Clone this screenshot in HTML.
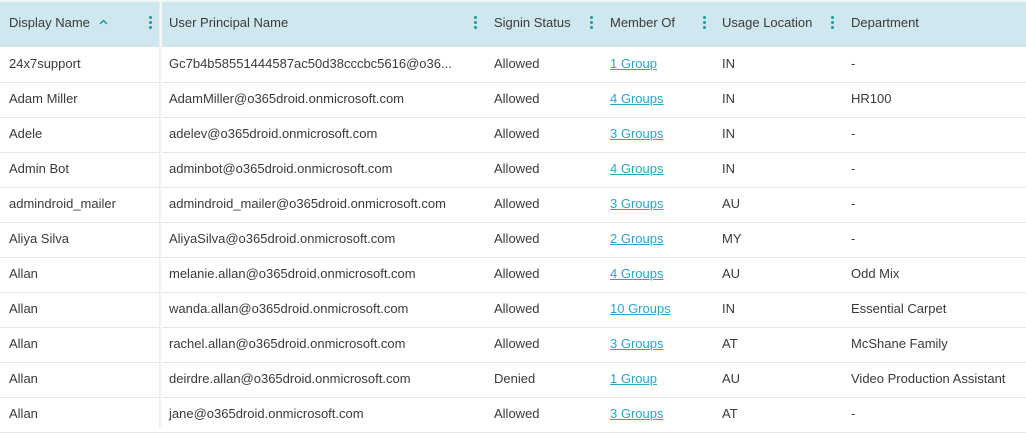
<!DOCTYPE html><html><head><style>
body{margin:0;width:1026px;height:426px;overflow:hidden;background:#fff;font-family:"Liberation Sans",Arial,sans-serif;font-size:13px;color:#3a3a3a}
.hd{position:absolute;top:2px;left:0;width:1026px;height:45px;background:#cfe7ee}
.top{position:absolute;top:0;left:0;width:1026px;height:2px;background:#eef6f8}
.t{position:absolute;white-space:nowrap}
.k{position:absolute;width:3px;top:16px}
.k i{display:block;width:3px;height:3px;background:#1a9a9a;border-radius:50%;margin-bottom:2px}
.row{position:absolute;left:0;width:1026px;height:35px;border-bottom:1px solid #e6e6e6;box-sizing:border-box}
a{color:#2aa5c9;text-decoration:underline}
.sh{position:absolute;left:159px;top:2px;width:3px;height:426px;background:linear-gradient(90deg,#ececec,#fbfbfb)}
</style></head><body>
<div class="top"></div><div class="hd"></div>
<div id="rows"></div>
<div class="sh"></div>
<div class="t" style="left:9px;top:15px">Display Name</div>
<svg style="position:absolute;left:99px;top:19px" width="9" height="6" viewBox="0 0 9 6"><path d="M1 5 L4.5 1.5 L8 5" fill="none" stroke="#1a9a9a" stroke-width="1.5"/></svg>
<div class="t" style="left:169px;top:15px">User Principal Name</div>
<div class="t" style="left:494px;top:15px">Signin Status</div>
<div class="t" style="left:610px;top:15px">Member Of</div>
<div class="t" style="left:722px;top:15px">Usage Location</div>
<div class="t" style="left:851px;top:15px">Department</div>
<div class="k" style="left:149px"><i></i><i></i><i></i></div>
<div class="k" style="left:474px"><i></i><i></i><i></i></div>
<div class="k" style="left:590px"><i></i><i></i><i></i></div>
<div class="k" style="left:703px"><i></i><i></i><i></i></div>
<div class="k" style="left:831px"><i></i><i></i><i></i></div>
<script>
var d=[["24x7support","Gc7b4b58551444587ac50d38cccbc5616@o36...","Allowed","1 Group","IN","-"],
["Adam Miller","AdamMiller@o365droid.onmicrosoft.com","Allowed","4 Groups","IN","HR100"],
["Adele","adelev@o365droid.onmicrosoft.com","Allowed","3 Groups","IN","-"],
["Admin Bot","adminbot@o365droid.onmicrosoft.com","Allowed","4 Groups","IN","-"],
["admindroid_mailer","admindroid_mailer@o365droid.onmicrosoft.com","Allowed","3 Groups","AU","-"],
["Aliya Silva","AliyaSilva@o365droid.onmicrosoft.com","Allowed","2 Groups","MY","-"],
["Allan","melanie.allan@o365droid.onmicrosoft.com","Allowed","4 Groups","AU","Odd Mix"],
["Allan","wanda.allan@o365droid.onmicrosoft.com","Allowed","10 Groups","IN","Essential Carpet"],
["Allan","rachel.allan@o365droid.onmicrosoft.com","Allowed","3 Groups","AT","McShane Family"],
["Allan","deirdre.allan@o365droid.onmicrosoft.com","Denied","1 Group","AU","Video Production Assistant"],
["Allan","jane@o365droid.onmicrosoft.com","Allowed","3 Groups","AT","-"]];
var x=[9,169,494,610,722,851],h="";
d.forEach(function(r,i){var y=48+i*35;h+='<div class="row" style="top:'+y+'px"></div>';
r.forEach(function(c,j){h+='<div class="t" style="left:'+x[j]+'px;top:'+(y+8)+'px">'+(j==3?'<a>'+c+'</a>':c)+'</div>'})});
document.getElementById('rows').innerHTML=h;
</script>
</body></html>
